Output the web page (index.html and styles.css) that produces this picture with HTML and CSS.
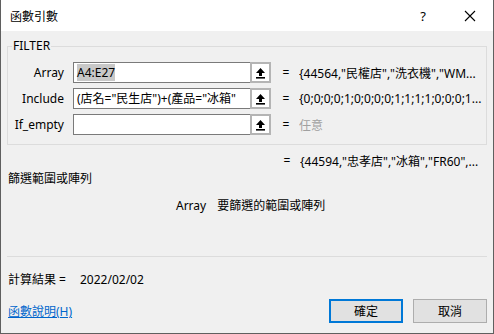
FILE: index.html
```html
<!DOCTYPE html>
<html lang="zh-TW">
  <head>
    <meta charset="UTF-8" />
    <title>函數引數</title>
    <link rel="stylesheet" href="styles.css">
  </head>
  <body>
    <div class="dialog">
      <!-- 標題列 -->
      <div class="titlebar">
        <span class="title">函數引數</span>
        <span class="help">?</span>
        <span class="close">
          <svg width="12" height="12" viewBox="0 0 12 12"><path d="M1 1L11 11M11 1L1 11" stroke="#000" stroke-width="1.1" fill="none"/></svg>
        </span>
      </div>

      <div class="body">
        <fieldset class="group">
          <legend>FILTER</legend>
          <div class="args">
            <span class="arg-label">Array</span>
            <div class="arg-input"><span class="sel">A4:E27</span></div>
            <span class="ref-btn"><svg width="11" height="12" viewBox="0 0 11 12"><path d="M5.5 1L1 6H4V9H7V6H10Z" fill="#000"/><rect x="1" y="10" width="9" height="1.6" fill="#000"/></svg></span>
            <span class="eq">=</span>
            <span class="val">{44564,"民權店","洗衣機","WM...</span>

            <span class="arg-label">Include</span>
            <div class="arg-input">(店名="民生店")+(產品="冰箱"</div>
            <span class="ref-btn"><svg width="11" height="12" viewBox="0 0 11 12"><path d="M5.5 1L1 6H4V9H7V6H10Z" fill="#000"/><rect x="1" y="10" width="9" height="1.6" fill="#000"/></svg></span>
            <span class="eq">=</span>
            <span class="val">{0;0;0;0;1;0;0;0;0;1;1;1;1;0;0;0;1...</span>

            <span class="arg-label">If_empty</span>
            <div class="arg-input"></div>
            <span class="ref-btn"><svg width="11" height="12" viewBox="0 0 11 12"><path d="M5.5 1L1 6H4V9H7V6H10Z" fill="#000"/><rect x="1" y="10" width="9" height="1.6" fill="#000"/></svg></span>
            <span class="eq">=</span>
            <span class="val muted">任意</span>
          </div>
        </fieldset>

        <div class="result-row">
          <span class="eq">=</span>
          <span class="val">{44594,"忠孝店","冰箱","FR60",...</span>
        </div>

        <p class="desc">篩選範圍或陣列</p>
        <p class="arg-desc"><span class="arg-name">Array</span>要篩選的範圍或陣列</p>

        <div class="footer">
          <div class="calc">計算結果 =<span class="calc-val">2022/02/02</span></div>
          <div class="actions">
            <a class="help-link" href="#">函數說明(H)</a>
            <button class="btn primary">確定</button>
            <button class="btn">取消</button>
          </div>
        </div>
      </div>
    </div>
  </body>
</html>
```

FILE: styles.css
```css
body {
  margin: 0;
  font-family: "Noto Sans", "Noto Sans CJK TC", sans-serif;
  font-size: 12px;
  color: #000;
}

/* 對話框外框 */
.dialog {
  width: 494px;
  height: 334px;
  box-sizing: border-box;
  border: 1px solid #5f5f5f;
  border-top: none;
  background: #f0f0f0;
  display: flex;
  flex-direction: column;
}

.titlebar {
  height: 31px;
  background: #fff;
  display: flex;
  align-items: center;
  padding-left: 9px;
}
.title {
  flex: 1;
}
.help {
  width: 46px;
  text-align: center;
  font-size: 13px;
  margin-right: 1px;
}
.close {
  width: 46px;
  height: 31px;
  display: flex;
  align-items: center;
  justify-content: center;
}

.body {
  flex: 1;
  display: flex;
  flex-direction: column;
  padding: 0 6px;
}

/* 參數群組框 */
.group {
  margin: 8px 0 0 0;
  padding: 9px 0 9px 0;
  border: 1px solid #dcdcdc;
  min-width: 0;
}
.group legend {
  padding: 0 1px;
  margin-left: 4px;
  line-height: 14px;
}

.args {
  display: grid;
  grid-template-columns: 65px 177px 21px 28px 1fr;
  row-gap: 5px;
  align-items: center;
}
.arg-label {
  text-align: right;
  padding-right: 9px;
}
.arg-input {
  height: 21px;
  box-sizing: border-box;
  border: 1px solid #7a7a7a;
  border-right: none;
  background: #fff;
  padding: 0 2px 0 3px;
  line-height: 19px;
  white-space: nowrap;
  overflow: hidden;
}
.sel {
  background: #c8c8c8;
}
.ref-btn {
  height: 21px;
  box-sizing: border-box;
  border: 2px solid #b4b4b4;
  background: #fff;
  display: flex;
  align-items: center;
  justify-content: center;
}
.eq {
  text-align: center;
  padding-left: 2px;
}
.val {
  white-space: nowrap;
  overflow: hidden;
}
.muted {
  color: #a0a0a0;
}

.result-row {
  display: grid;
  grid-template-columns: 28px 1fr;
  margin: 7px 0 0 265px;
}

.desc {
  margin: -1px 0 0 1px;
}
.arg-desc {
  margin: 9px 0 0 169px;
}
.arg-name {
  margin-right: 11px;
}

.footer {
  margin-top: auto;
  border-top: 1px solid #dcdcdc;
  margin-bottom: 10px;
}
.calc {
  margin: 13px 0 0 1px;
}
.calc-val {
  margin-left: 14px;
}
.actions {
  display: flex;
  align-items: center;
  margin-top: 11px;
}
.help-link {
  flex: 1;
  color: #0066cc;
  margin-left: 1px;
}
.btn {
  width: 74px;
  height: 24px;
  margin-left: 10px;
  border: 1px solid #adadad;
  background: #e1e1e1;
  font-family: inherit;
  font-size: 12px;
  padding: 0;
}
.btn.primary {
  border: 2px solid #0078d7;
  margin-left: 0;
}
```
